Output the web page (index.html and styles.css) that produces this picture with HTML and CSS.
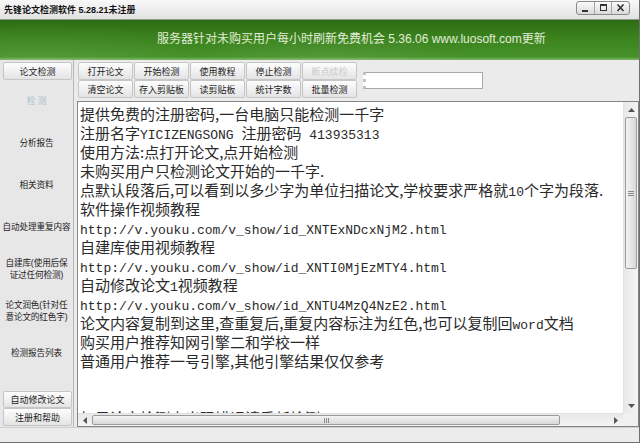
FILE: index.html
```html
<!DOCTYPE html>
<html>
<head>
    <title>先锋论文检测软件</title>
    <link rel="stylesheet" href="styles.css">
</head>
<body>
    <div class="window">
        <!-- Barra de título -->
        <div class="titlebar">
            <span class="title">先锋论文检测软件 5.28.21未注册</span>
            <div class="winbtns">
                <span class="wb"><svg width="9" height="8" viewBox="0 0 9 8"><rect x="1" y="6" width="6" height="2" fill="#333"/></svg></span>
                <span class="wb"><svg width="9" height="8" viewBox="0 0 9 8"><rect x="1.5" y="0.5" width="6" height="6" fill="none" stroke="#333"/><rect x="1.5" y="0.5" width="6" height="1.5" fill="#333"/></svg></span>
                <span class="wb wb-close"><svg width="9" height="8" viewBox="0 0 9 8"><path d="M1.5 0.5 L7.5 7 M7.5 0.5 L1.5 7" stroke="#333" stroke-width="1.6"/></svg></span>
            </div>
        </div>

        <!-- Banner -->
        <div class="banner">
            <span>服务器针对未购买用户每小时刷新免费机会 5.36.06 www.luosoft.com更新</span>
        </div>

        <div class="main">
            <!-- Menú lateral -->
            <div class="sidebar">
                <button class="btn side-btn">论文检测</button>
                <div class="side-list">
                    <div class="side-item disabled">检 测</div>
                    <div class="side-item">分析报告</div>
                    <div class="side-item">相关资料</div>
                    <div class="side-item">自动处理重复内容</div>
                    <div class="side-item">自建库(使用后保<br>证过任何检测)</div>
                    <div class="side-item">论文润色(针对任<br>意论文的红色字)</div>
                    <div class="side-item">检测报告列表</div>
                </div>
                <button class="btn side-btn side-bottom">自动修改论文</button>
                <button class="btn side-btn">注册和帮助</button>
            </div>

            <!-- Zona de trabajo -->
            <div class="work">
                <div class="toolbar">
                    <div class="btn-grid">
                        <button class="btn">打开论文</button>
                        <button class="btn">开始检测</button>
                        <button class="btn">使用教程</button>
                        <button class="btn">停止检测</button>
                        <button class="btn" disabled>断点续检</button>
                        <button class="btn">清空论文</button>
                        <button class="btn">存入剪贴板</button>
                        <button class="btn">读剪贴板</button>
                        <button class="btn">统计字数</button>
                        <button class="btn">批量检测</button>
                    </div>
                    <div class="path-input"></div>
                </div>

                <div class="editor">
                    <div class="editor-text">
                        <p>提供免费的注册密码,一台电脑只能检测一千字</p>
                        <p>注册名字<span class="en">YICIZENGSONG </span>注册密码<span class="en"> 413935313</span></p>
                        <p>使用方法:点打开论文,点开始检测</p>
                        <p>未购买用户只检测论文开始的一千字.</p>
                        <p>点默认段落后,可以看到以多少字为单位扫描论文,学校要求严格就<span class="en">10</span>个字为段落.</p>
                        <p>软件操作视频教程</p>
                        <p><span class="en">http://v.youku.com/v_show/id_XNTExNDcxNjM2.html</span></p>
                        <p>自建库使用视频教程</p>
                        <p><span class="en">http://v.youku.com/v_show/id_XNTI0MjEzMTY4.html</span></p>
                        <p>自动修改论文<span class="en">1</span>视频教程</p>
                        <p><span class="en">http://v.youku.com/v_show/id_XNTU4MzQ4NzE2.html</span></p>
                        <p>论文内容复制到这里,查重复后,重复内容标注为红色,也可以复制回<span class="en">word</span>文档</p>
                        <p>购买用户推荐知网引擎二和学校一样</p>
                        <p>普通用户推荐一号引擎,其他引擎结果仅仅参考</p>
                        <p>&nbsp;</p>
                        <p>&nbsp;</p>
                        <p class="clipped">如果论文检测中出现错误请重新检测</p>
                    </div>
                    <div class="vscroll">
                        <div class="arrow"><svg width="7" height="4" viewBox="0 0 7 4"><path d="M0 4 L3.5 0 L7 4 Z" fill="#555"/></svg></div>
                        <div class="track">
                            <div class="thumb thumb-v"><span class="grip-v"></span></div>
                        </div>
                        <div class="arrow"><svg width="7" height="4" viewBox="0 0 7 4"><path d="M0 0 L3.5 4 L7 0 Z" fill="#555"/></svg></div>
                    </div>
                    <div class="hscroll">
                        <div class="arrow"><svg width="4" height="7" viewBox="0 0 4 7"><path d="M4 0 L0 3.5 L4 7 Z" fill="#555"/></svg></div>
                        <div class="track">
                            <div class="thumb thumb-h"><span class="grip-h"></span></div>
                        </div>
                        <div class="arrow"><svg width="4" height="7" viewBox="0 0 4 7"><path d="M0 0 L4 3.5 L0 7 Z" fill="#555"/></svg></div>
                    </div>
                    <div class="corner"></div>
                </div>
            </div>
        </div>

        <div class="statusbar"></div>
    </div>
</body>
</html>
```

FILE: styles.css
```css
/* Estilos generales */
:root {
    --gris-fondo: #ebebeb;
    --gris-borde: #c6c6c6;
    --texto: #222222;
    --verde-oscuro: #2e6c14;
    --verde-medio: #46922a;
}

* {
    margin: 0;
    padding: 0;
    box-sizing: border-box;
}

body {
    width: 640px;
    height: 443px;
    overflow: hidden;
    font-family: "Liberation Sans", "Noto Sans CJK SC", sans-serif;
    background: var(--gris-fondo);
    color: var(--texto);
}

.window {
    width: 640px;
    height: 443px;
    display: flex;
    flex-direction: column;
    border-right: 1px solid #6f6f6f;
    border-bottom: 1px solid #6f6f6f;
    background: var(--gris-fondo);
}

/* Barra de título */
.titlebar {
    height: 20px;
    flex: none;
    display: flex;
    align-items: center;
    justify-content: space-between;
    padding: 0 9px 0 4px;
    background: linear-gradient(#f8f8f8, #e2e2e2);
    border-bottom: 1px solid #8e9a8a;
}

.title {
    font-size: 9px;
    font-weight: bold;
    color: #111;
}

.winbtns {
    display: flex;
    height: 14px;
    margin-top: -3px;
    border: 1px solid #8a8a8a;
    border-radius: 3px;
    background: linear-gradient(#fbfbfb, #dadada);
}

.wb {
    width: 17px;
    display: flex;
    align-items: center;
    justify-content: center;
    border-left: 1px solid #a6a6a6;
}

.wb:first-child {
    border-left: 0;
}

.wb-close {
    width: 18px;
}

/* Banner */
.banner {
    height: 40px;
    flex: none;
    display: flex;
    align-items: center;
    padding: 0 0 6px 157px;
    font-size: 12px;
    color: #e2ecda;
    background:
        radial-gradient(ellipse 140px 30px at 330px 42px, rgba(255, 255, 255, 0.08), transparent),
        radial-gradient(ellipse 160px 40px at 40px 40px, rgba(255, 255, 255, 0.07), transparent),
        linear-gradient(180deg, var(--verde-oscuro) 0%, #3b831d 45%, var(--verde-medio) 92%, #7fb866 100%);
}

/* Contenido principal */
.main {
    flex: 1;
    display: flex;
    min-height: 0;
}

/* Botones */
.btn {
    height: 18px;
    font-family: "Liberation Sans", "Noto Sans CJK SC", sans-serif;
    font-size: 9px;
    color: var(--texto);
    background: linear-gradient(#fdfdfd, #e4e4e4);
    border: 1px solid var(--gris-borde);
    border-radius: 2px;
    cursor: pointer;
    white-space: nowrap;
}

.btn:disabled {
    color: #c9c9c9;
}

/* Menú lateral */
.sidebar {
    width: 74px;
    flex: none;
    display: flex;
    flex-direction: column;
    padding: 2px 1px 1px 3px;
    background: #e7e7e7;
    border-right: 1px solid #b8b8b8;
}

.side-btn {
    width: 69px;
    flex: none;
}

.side-list {
    display: flex;
    flex-direction: column;
    margin-left: -3px;
    margin-right: -1px;
}

.side-item {
    height: 42px;
    display: flex;
    align-items: center;
    justify-content: center;
    text-align: center;
    font-size: 8.6px;
    line-height: 12px;
    letter-spacing: -0.1px;
    white-space: nowrap;
    color: var(--texto);
}

.side-item.disabled {
    color: #a9c2cc;
}

.side-bottom {
    margin-top: auto;
    height: 17px;
}

/* Zona de trabajo */
.work {
    flex: 1;
    display: flex;
    flex-direction: column;
    min-width: 0;
}

.toolbar {
    height: 41px;
    flex: none;
    display: flex;
    padding: 2px 0 0 4px;
}

.btn-grid {
    display: grid;
    grid-template-columns: repeat(5, 55px);
    grid-auto-rows: 18px;
    column-gap: 1px;
}

.path-input {
    width: 120px;
    height: 17px;
    margin: 10px 0 0 6px;
    background: #fff;
    border: 1px solid #a9a9a9;
    border-left: 3px dotted #c4c4c4;
}

/* Área de texto */
.editor {
    flex: 1;
    margin-left: 3px;
    display: grid;
    grid-template-columns: 1fr 15px;
    grid-template-rows: 1fr 13px;
    min-height: 0;
    background: #fff;
    border: 1px solid #858585;
}

.editor-text {
    overflow: hidden;
    padding: 2px 0 0 2px;
    font-family: "Noto Sans CJK SC", sans-serif;
    font-size: 15px;
    line-height: 19px;
    color: #2a2a2a;
    white-space: nowrap;
}

.editor-text p {
    height: 19px;
}

.editor-text .en {
    font-family: "Liberation Mono", monospace;
    font-size: 13px;
    line-height: 1;
}

/* Barras de desplazamiento */
.vscroll {
    display: flex;
    flex-direction: column;
    background: linear-gradient(90deg, #e8e8e8, #f4f4f4);
    border-left: 1px solid #e2e2e2;
}

.vscroll .arrow {
    height: 15px;
    flex: none;
    display: flex;
    align-items: center;
    justify-content: center;
}

.vscroll .track {
    flex: 1;
    display: flex;
    flex-direction: column;
    padding: 0 1px;
}

.thumb {
    display: flex;
    align-items: center;
    justify-content: center;
    border: 1px solid #9b9b9b;
    border-radius: 2px;
}

.thumb-v {
    height: 152px;
    background: linear-gradient(90deg, #f3f3f3, #d9d9d9);
}

.grip-v {
    width: 6px;
    height: 5px;
    border-top: 1px solid #8a8a8a;
    border-bottom: 1px solid #8a8a8a;
    background: linear-gradient(transparent 1px, #8a8a8a 1px 2px, transparent 2px);
}

.hscroll {
    display: flex;
    background: linear-gradient(#e8e8e8, #f4f4f4);
    border-top: 1px solid #e2e2e2;
}

.hscroll .arrow {
    width: 14px;
    flex: none;
    display: flex;
    align-items: center;
    justify-content: center;
}

.hscroll .track {
    flex: 1;
    display: flex;
    padding: 1px 0;
}

.thumb-h {
    width: 468px;
    background: linear-gradient(#f3f3f3, #d9d9d9);
}

.grip-h {
    width: 5px;
    height: 5px;
    border-left: 1px solid #8a8a8a;
    border-right: 1px solid #8a8a8a;
    background: linear-gradient(90deg, transparent 1px, #8a8a8a 1px 2px, transparent 2px);
}

.corner {
    background: #f0f0f0;
}

/* Barra de estado */
.statusbar {
    height: 15px;
    flex: none;
    background: #ececec;
    border-top: 1px solid #cfcfcf;
}
```
